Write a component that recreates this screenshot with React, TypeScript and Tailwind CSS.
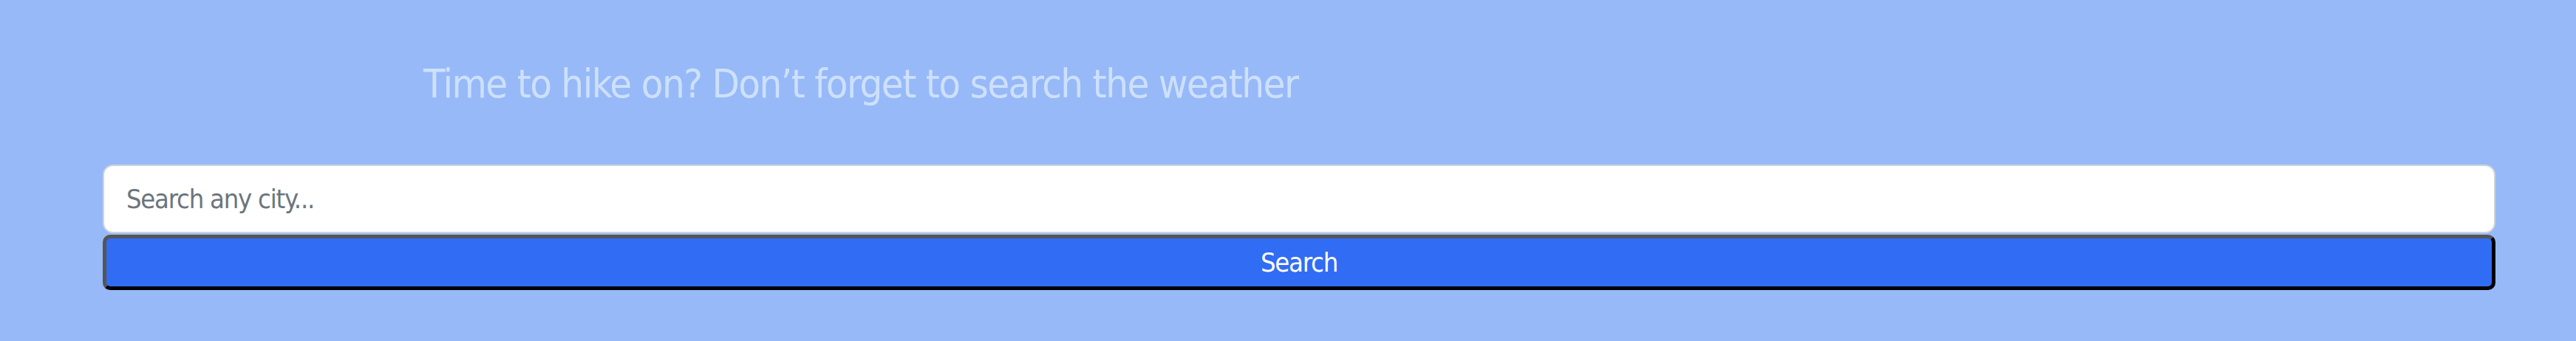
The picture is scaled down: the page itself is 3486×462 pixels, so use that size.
export default function App() {
  return (
    <div
      className="min-h-[462px] w-full bg-[#97b9f8] pl-[139px] pr-[109px] pt-[78px]"
      style={{ fontFamily: '"Liberation Sans Narrow", "DejaVu Sans Condensed", sans-serif' }}
    >
      <h1 className="ml-[434px] text-[54px] leading-[72px] tracking-[-1.5px] text-[#cde0fc]">
        Time to hike on? Don’t forget to search the weather
      </h1>
      <form className="mt-[73px] flex flex-col" onSubmit={(e) => e.preventDefault()}>
        <input
          type="text"
          placeholder="Search any city..."
          className="h-[93px] w-full rounded-[14px] border-2 border-[#ced4da] bg-white px-[30px] text-[36px] tracking-[-1.2px] text-[#495057] placeholder:text-[#6c757d] outline-none"
        />
        <button
          type="submit"
          className="mt-[2px] h-[75px] w-full rounded-[10px] border-[5px] border-t-[#555555] border-l-[#555555] border-b-black border-r-black bg-[#316cf4] text-[36px] tracking-[-1.2px] text-white"
        >
          Search
        </button>
      </form>
    </div>
  );
}
